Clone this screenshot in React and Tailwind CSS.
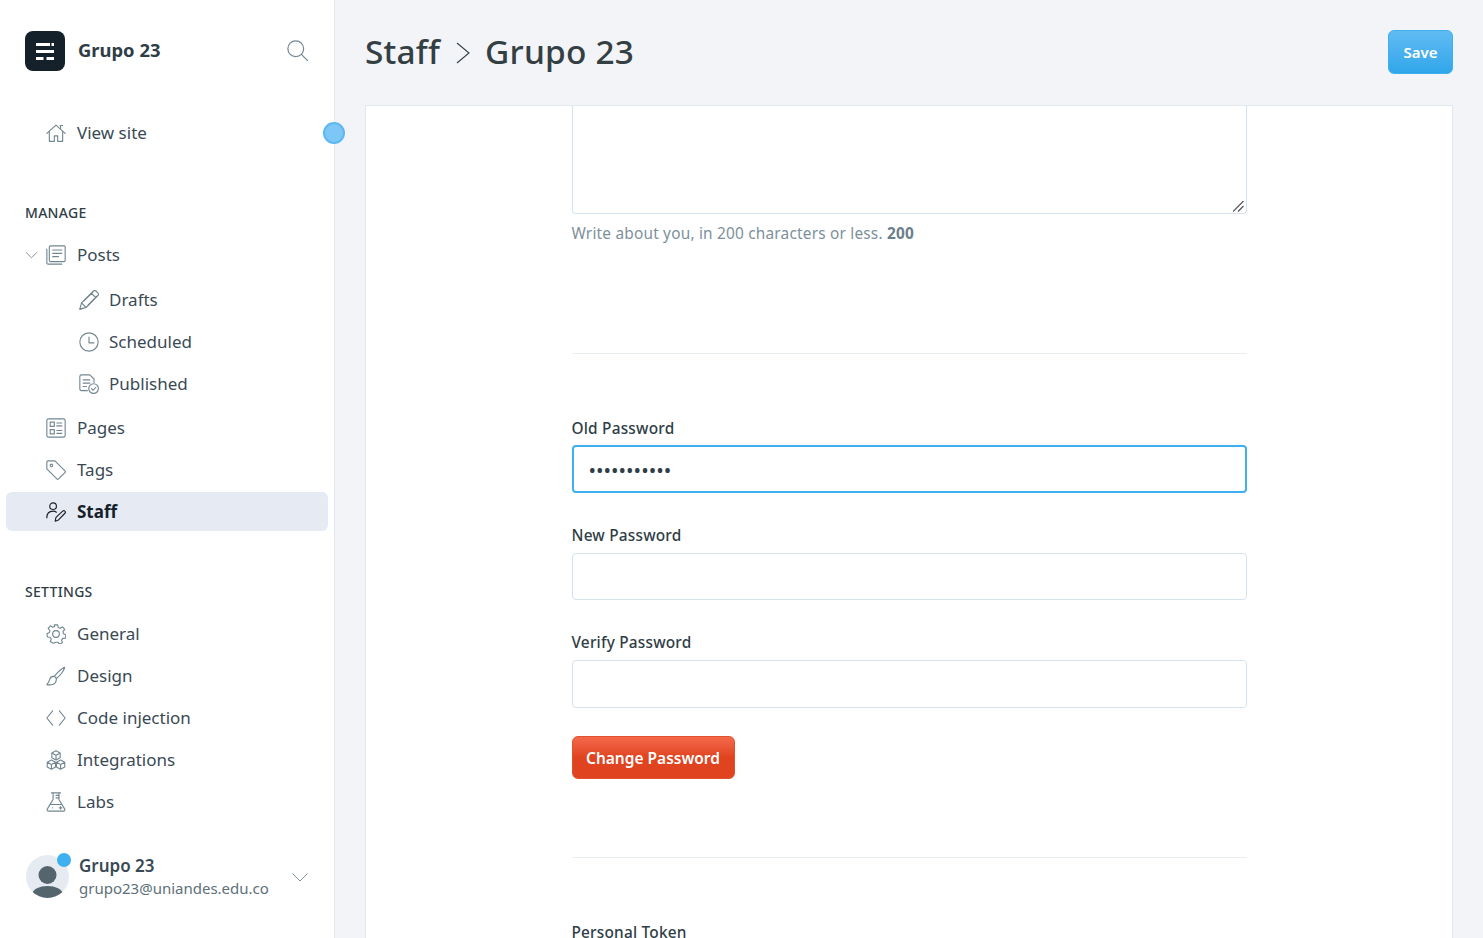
import { useState } from "react";

const FONT = "font-['Noto_Sans','Open_Sans',sans-serif]";

function Icon({ children, className = "w-5 h-5" }) {
	return (
		<svg viewBox="0 0 24 24" fill="none" stroke="currentColor" strokeWidth="1.35" strokeLinecap="round" strokeLinejoin="round" className={`shrink-0 ${className}`}>
			{children}
		</svg>
	);
}

const HomeIcon = () => (
	<Icon>
		<path d="M1 12.500 12 2.500l11 10" />
		<path d="M17.500 3v3.500M20 3h-3M4 10.500V22h6v-6.500h4V22h6V10.500" />
	</Icon>
);
const PostsIcon = () => (
	<Icon>
		<rect x="4" y="1" width="19" height="19" rx="1.500" />
		<path d="M8 6h11M8 10h11M8 14h7" />
		<path d="M1 5v16.500A1.500 1.500 0 0 0 2.500 23H19" />
	</Icon>
);
const PencilIcon = () => (
	<Icon>
		<path d="M1 23l2-7.500L17.500 1.200a2 2 0 0 1 2.800 0l2.500 2.500a2 2 0 0 1 0 2.800L8.500 21z" />
		<path d="M3 15.500 8.500 21M15 4l5 5M6 13 17 2M11 18 22 7M1 23l4-1" />
	</Icon>
);
const ClockIcon = () => (
	<Icon>
		<circle cx="12" cy="12" r="11" />
		<path d="M12 6v7h6" />
	</Icon>
);
const PublishedIcon = () => (
	<Icon>
		<path d="M10 20H3a2 2 0 0 1-2-2V3a2 2 0 0 1 2-2h10l5 5v4" />
		<path d="M5 7h8M5 11h8M5 15h4" />
		<circle cx="17.500" cy="17.500" r="5.800" />
		<path d="m15 17.500 2 2 3.200-3.600" />
	</Icon>
);
const PagesIcon = () => (
	<Icon>
		<rect x="1" y="1" width="22" height="22" rx="2" />
		<rect x="5" y="5" width="5" height="5" />
		<rect x="5" y="14" width="5" height="5" />
		<path d="M13 6h6M13 9.500h6M13 15h6M13 18.500h6" />
	</Icon>
);
const TagIcon = () => (
	<Icon>
		<path d="M1 2.500A1.500 1.500 0 0 1 2.500 1h8.200l12 12a1.500 1.500 0 0 1 0 2.100l-7.600 7.600a1.500 1.500 0 0 1-2.100 0l-12-12z" />
		<circle cx="6.500" cy="6.500" r="1.500" />
	</Icon>
);
const StaffIcon = () => (
	<Icon>
		<circle cx="8.500" cy="5" r="4" />
		<path d="M1 19c0-5 3-8 7.500-8 1.500 0 3 .5 4 1.200" />
		<path d="M11 23l1-4.500L20 11a1.800 1.800 0 0 1 2.700 2.500L15 21.500z" />
	</Icon>
);
const GearIcon = () => (
	<Icon>
		<circle cx="12" cy="12" r="4" />
		<path d="M10 1h4l.7 3.200 2.200 1 2.900-1.700 2.600 3-2 2.600.5 2.500 3 1.400-.6 3.900-3.200.3-1.400 2.100 1.100 3-3.400 2-2.200-2.400h-2.400L8.600 23l-3.400-2 1.100-3-1.400-2.100-3.200-.3-.6-3.900 3-1.400.5-2.500-2-2.600 2.600-3 2.900 1.700 2.200-1z" />
	</Icon>
);
const BrushIcon = () => (
	<Icon>
		<path d="M22.500 1.500c-3 1.200-9 6.500-12.500 11l2.500 2.500c4.500-3.500 9.800-10.500 10-13.500z" />
		<path d="M10 12.500c-3-.5-5 1-5.500 3.500-.4 2-1.300 3.500-3.500 6.500 4 .5 9 0 10.500-3 1-2 1-3.500 1-4.500" />
	</Icon>
);
const CodeIcon = () => (
	<Icon>
		<path d="M8 3.500 1 12l7 8.500M16 3.500 23 12l-7 8.500" />
	</Icon>
);
const CubesIcon = () => (
	<Icon>
		<path d="m12 1 5 2.700v5.600L12 12l-5-2.700V3.700zM7 3.700l5 2.700 5-2.700M12 6.400V12" />
		<path d="m6.500 12 5 2.700v5.600L6.500 23l-5-2.700v-5.600zM1.500 14.700l5 2.700 5-2.700M6.500 17.400V23" />
		<path d="m17.500 12 5 2.700v5.600l-5 2.700-5-2.700v-5.600zM12.500 14.700l5 2.700 5-2.700M17.500 17.400V23" />
	</Icon>
);
const FlaskIcon = () => (
	<Icon>
		<path d="M6.500 1h11M8.500 1v8L1.500 20.500A1.700 1.700 0 0 0 3 23h18a1.700 1.700 0 0 0 1.500-2.500L15.500 9V1" />
		<path d="M5 15h14M12 4h3.500M12 7h3.500M8 19h.1M16 19h3M17.500 17.500v3" />
	</Icon>
);

function NavItem({ icon, label, active, sub, chevron }) {
	return (
		<div
			className={`flex items-center rounded-md h-[39px] text-[17px] ${sub ? "pl-[73px]" : "pl-10"} ${
				active ? "bg-[#e6eaf2] font-bold text-[#15212a]" : "text-[#3a4a55]"
			}`}
		>
			{chevron && (
				<svg viewBox="0 0 14 8" fill="none" stroke="#7d909b" strokeWidth="1" className="w-[13px] h-[8px] -ml-[21px] mr-2">
					<path d="M1 1l6 6 6-6" />
				</svg>
			)}
			<span className={active ? "text-[#15212a]" : "text-[#738791]"}>{icon}</span>
			<span className={sub ? "ml-2.5" : "ml-[11px]"}>{label}</span>
		</div>
	);
}

function Field({ label, value, focused, className = "", labelClass = "mb-[7px]", inputClass = "h-[47px]" }) {
	const [val, setVal] = useState(value || "");
	return (
		<div className={className}>
			<label className={`block text-[15.400px] font-medium leading-5 text-[#2f3d46] tracking-[0.2px] ${labelClass}`}>{label}</label>
			<input
				type="password"
				value={val}
				onChange={(e) => setVal(e.target.value)}
				className={`block w-full rounded px-[15px] bg-white text-[#2f3d46] text-[20px] outline-none ${inputClass} ${
					focused ? "border-2 border-[#3eb0ef]" : "border border-[#d5e3ec]"
				}`}
			/>
		</div>
	);
}

export default function App() {
	return (
		<div className={`${FONT} flex h-[938px] overflow-hidden bg-[#f3f4f8]`}>
			<aside className="relative w-[335px] shrink-0 bg-white border-r border-[#e3e8ee] pl-[6px] pr-[6px]">
				<div className="flex items-center h-[102px] pl-[19px] pr-5">
					<div className="flex items-center justify-center w-10 h-10 rounded-lg bg-[#15212a]">
						<svg viewBox="0 0 18 17" className="w-[18px] h-[17px]" fill="#ffffff">
							<rect x="0" y="0" width="14" height="3" />
							<rect x="15.500" y="0" width="2.500" height="3" />
							<rect x="0" y="7" width="18" height="3" />
							<rect x="0" y="14" width="7.500" height="3" />
							<rect x="10.500" y="14" width="7.500" height="3" />
						</svg>
					</div>
					<span className="ml-[13px] mb-[2px] text-[18.400px] font-bold text-[#2f3d46]">Grupo 23</span>
					<svg viewBox="0 0 24 24" fill="none" stroke="#738791" strokeWidth="1.400" strokeLinecap="round" className="ml-auto mb-[2px] w-[21px] h-[21px]">
						<circle cx="10" cy="10" r="9" />
						<path d="m16.500 16.500 7 7" />
					</svg>
				</div>

				<div className="mt-[11px]">
					<NavItem icon={<HomeIcon />} label="View site" />
				</div>
				<div className="absolute left-[323px] top-[122px] w-[22px] h-[22px] rounded-full bg-[#7cc7f5] border-2 border-[#5cb8f2]" />

				<h3 className="mt-[51px] pl-[19px] text-[14px] leading-5 font-medium text-[#2f3d46] tracking-[0.3px]">MANAGE</h3>
				<div className="mt-3">
					<NavItem chevron icon={<PostsIcon />} label="Posts" />
					<div className="mt-[6px] flex flex-col gap-[3px]">
						<NavItem sub icon={<PencilIcon />} label="Drafts" />
						<NavItem sub icon={<ClockIcon />} label="Scheduled" />
						<NavItem sub icon={<PublishedIcon />} label="Published" />
					</div>
					<div className="mt-[5px] flex flex-col gap-[3px]">
						<NavItem icon={<PagesIcon />} label="Pages" />
						<NavItem icon={<TagIcon />} label="Tags" />
						<NavItem active icon={<StaffIcon />} label="Staff" />
					</div>
				</div>

				<h3 className="mt-[51px] pl-[19px] text-[14px] leading-5 font-medium text-[#2f3d46] tracking-[0.3px]">SETTINGS</h3>
				<div className="mt-3 flex flex-col gap-[3px]">
					<NavItem icon={<GearIcon />} label="General" />
					<NavItem icon={<BrushIcon />} label="Design" />
					<NavItem icon={<CodeIcon />} label="Code injection" />
					<NavItem icon={<CubesIcon />} label="Integrations" />
					<NavItem icon={<FlaskIcon />} label="Labs" />
				</div>

				<div className="mt-[32px] flex items-center pl-5 pr-5">
					<div className="relative w-[43px] h-[43px] shrink-0">
						<div className="w-[43px] h-[43px] rounded-full bg-[#e6ebf2] overflow-hidden">
							<svg viewBox="0 0 43 43" className="w-full h-full" fill="#55656d">
								<circle cx="21.500" cy="20" r="9" />
								<ellipse cx="21.500" cy="39" rx="15" ry="8" />
							</svg>
						</div>
						<span className="absolute -top-[2px] right-[-2px] w-[14px] h-[14px] rounded-full bg-[#3eb0ef]" />
					</div>
					<div className="ml-[10px] mt-[2px] flex flex-col">
						<span className="text-[17px] leading-[22px] font-semibold text-[#3a4a55]">Grupo 23</span>
						<span className="text-[15px] leading-[22px] text-[#5d7079]">grupo23@uniandes.edu.co</span>
					</div>
					<svg viewBox="0 0 16 9" fill="none" stroke="#7d909b" strokeWidth="1" className="ml-auto mt-[2px] w-4 h-[9px]">
						<path d="M.5.500 8 8 15.500.500" />
					</svg>
				</div>
			</aside>

			<main className="flex-1 min-w-0 flex flex-col pl-[30px] pr-[30px]">
				<header className="flex items-center justify-between h-[105px] shrink-0">
					<h1 className="flex items-center mb-[3px] text-[33.400px] font-medium text-[#343f44] tracking-[0.2px]">
						Staff
						<svg viewBox="0 0 14 22" fill="none" stroke="#343f44" strokeWidth="1.100" className="mx-[15.500px] mt-1 w-[14px] h-[22px]">
							<path d="M1 1l12 10L1 21" />
						</svg>
						Grupo 23
					</h1>
					<button className="w-[65px] h-[44px] mb-[2px] pt-[2px] rounded-md border border-[#3eb0ef] bg-gradient-to-b from-[#5fbbf3] to-[#2fa6ea] text-white text-[15px] font-semibold">
						Save
					</button>
				</header>

				<section className="flex-1 bg-white border border-[#e3e8ee]">
					<div className="w-[675px] mx-auto">
						<div className="relative">
							<textarea
								readOnly
								className="block w-full h-[108px] bg-white border border-t-0 border-[#d5e3ec] rounded-b outline-none resize-none"
							/>
							<svg viewBox="0 0 11 11" fill="none" stroke="#555555" strokeWidth="1.200" className="absolute right-[3px] bottom-[2px] w-[11px] h-[11px]">
								<path d="M0 10.500 10.500 0M5 10.500l5.500-5.500" />
							</svg>
						</div>
						<p className="mt-2 text-[15.400px] leading-6 text-[#7d909b] tracking-[0.2px]">
							Write about you, in 200 characters or less. <b className="text-[#6b7f8a]">200</b>
						</p>

						<hr className="mt-[107px] border-[#e8edf2]" />

						<Field className="mt-[65px]" label="Old Password" value="abcdefghijk" focused labelClass="mb-[6px]" inputClass="h-[48px] pt-[3px]" />
						<Field className="mt-[33px]" label="New Password" />
						<Field className="mt-[33px]" label="Verify Password" inputClass="h-[48px]" />

						<button className="mt-[28px] w-[163px] h-[43px] pt-[3px] rounded-md border border-[#e2512d] bg-gradient-to-b from-[#f4694a] via-[#e0431f] to-[#e0431f] text-white text-[15.500px] font-semibold">
							Change Password
						</button>

						<hr className="mt-[78px] border-[#e8edf2]" />

						<div className="mt-[65px] text-[15.400px] font-medium leading-5 text-[#2f3d46] tracking-[0.2px]">Personal Token</div>
					</div>
				</section>
			</main>
		</div>
	);
}
